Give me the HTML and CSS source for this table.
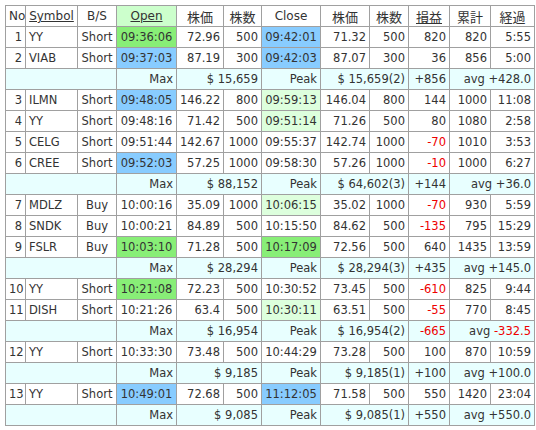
FILE: index.html
```html
<!DOCTYPE html>
<html>
<head>
<meta charset="utf-8">
<link rel="stylesheet" href="styles.css">
</head>
<body>
<table class="trades">
<colgroup>
<col class="c-no"><col class="c-sym"><col class="c-bs"><col class="c-open"><col class="c-p1"><col class="c-q1"><col class="c-close"><col class="c-p2"><col class="c-q2"><col class="c-pl"><col class="c-cum"><col class="c-el">
</colgroup>
<thead>
<tr>
<th>No</th><th><span class="lnk">Symbol</span></th><th>B/S</th><th class="hopen"><span class="lnk">Open</span></th><th class="cjk">株価</th><th class="cjk">株数</th><th>Close</th><th class="cjk">株価</th><th class="cjk">株数</th><th class="cjk"><span class="lnk">損益</span></th><th class="cjk">累計</th><th class="cjk">経過</th>
</tr>
</thead>
<tbody>
<tr><td class="r">1</td><td>YY</td><td class="c">Short</td><td class="c g">09:36:06</td><td class="r">72.96</td><td class="r">500</td><td class="c b">09:42:01</td><td class="r">71.32</td><td class="r">500</td><td class="r">820</td><td class="r">820</td><td class="r">5:55</td></tr>
<tr><td class="r">2</td><td>VIAB</td><td class="c">Short</td><td class="c b">09:37:03</td><td class="r">87.19</td><td class="r">300</td><td class="c b">09:42:03</td><td class="r">87.07</td><td class="r">300</td><td class="r">36</td><td class="r">856</td><td class="r">5:00</td></tr>
<tr class="sum"><td colspan="3"></td><td class="r">Max</td><td colspan="2" class="r">$ 15,659</td><td class="r">Peak</td><td colspan="2" class="r">$ 15,659(2)</td><td class="r">+856</td><td colspan="2" class="r">avg +428.0</td></tr>
<tr><td class="r">3</td><td>ILMN</td><td class="c">Short</td><td class="c b">09:48:05</td><td class="r">146.22</td><td class="r">800</td><td class="c lg">09:59:13</td><td class="r">146.04</td><td class="r">800</td><td class="r">144</td><td class="r">1000</td><td class="r">11:08</td></tr>
<tr><td class="r">4</td><td>YY</td><td class="c">Short</td><td class="c">09:48:16</td><td class="r">71.42</td><td class="r">500</td><td class="c lg">09:51:14</td><td class="r">71.26</td><td class="r">500</td><td class="r">80</td><td class="r">1080</td><td class="r">2:58</td></tr>
<tr><td class="r">5</td><td>CELG</td><td class="c">Short</td><td class="c">09:51:44</td><td class="r">142.67</td><td class="r">1000</td><td class="c">09:55:37</td><td class="r">142.74</td><td class="r">1000</td><td class="r neg">-70</td><td class="r">1010</td><td class="r">3:53</td></tr>
<tr><td class="r">6</td><td>CREE</td><td class="c">Short</td><td class="c b">09:52:03</td><td class="r">57.25</td><td class="r">1000</td><td class="c">09:58:30</td><td class="r">57.26</td><td class="r">1000</td><td class="r neg">-10</td><td class="r">1000</td><td class="r">6:27</td></tr>
<tr class="sum"><td colspan="3"></td><td class="r">Max</td><td colspan="2" class="r">$ 88,152</td><td class="r">Peak</td><td colspan="2" class="r">$ 64,602(3)</td><td class="r">+144</td><td colspan="2" class="r">avg +36.0</td></tr>
<tr><td class="r">7</td><td>MDLZ</td><td class="c">Buy</td><td class="c">10:00:16</td><td class="r">35.09</td><td class="r">1000</td><td class="c lg">10:06:15</td><td class="r">35.02</td><td class="r">1000</td><td class="r neg">-70</td><td class="r">930</td><td class="r">5:59</td></tr>
<tr><td class="r">8</td><td>SNDK</td><td class="c">Buy</td><td class="c">10:00:21</td><td class="r">84.89</td><td class="r">500</td><td class="c">10:15:50</td><td class="r">84.62</td><td class="r">500</td><td class="r neg">-135</td><td class="r">795</td><td class="r">15:29</td></tr>
<tr><td class="r">9</td><td>FSLR</td><td class="c">Buy</td><td class="c g">10:03:10</td><td class="r">71.28</td><td class="r">500</td><td class="c g">10:17:09</td><td class="r">72.56</td><td class="r">500</td><td class="r">640</td><td class="r">1435</td><td class="r">13:59</td></tr>
<tr class="sum"><td colspan="3"></td><td class="r">Max</td><td colspan="2" class="r">$ 28,294</td><td class="r">Peak</td><td colspan="2" class="r">$ 28,294(3)</td><td class="r">+435</td><td colspan="2" class="r">avg +145.0</td></tr>
<tr><td class="r">10</td><td>YY</td><td class="c">Short</td><td class="c g">10:21:08</td><td class="r">72.23</td><td class="r">500</td><td class="c">10:30:52</td><td class="r">73.45</td><td class="r">500</td><td class="r neg">-610</td><td class="r">825</td><td class="r">9:44</td></tr>
<tr><td class="r">11</td><td>DISH</td><td class="c">Short</td><td class="c">10:21:26</td><td class="r">63.4</td><td class="r">500</td><td class="c lg">10:30:11</td><td class="r">63.51</td><td class="r">500</td><td class="r neg">-55</td><td class="r">770</td><td class="r">8:45</td></tr>
<tr class="sum"><td colspan="3"></td><td class="r">Max</td><td colspan="2" class="r">$ 16,954</td><td class="r">Peak</td><td colspan="2" class="r">$ 16,954(2)</td><td class="r neg">-665</td><td colspan="2" class="r">avg <span class="neg">-332.5</span></td></tr>
<tr><td class="r">12</td><td>YY</td><td class="c">Short</td><td class="c">10:33:30</td><td class="r">73.48</td><td class="r">500</td><td class="c">10:44:29</td><td class="r">73.28</td><td class="r">500</td><td class="r">100</td><td class="r">870</td><td class="r">10:59</td></tr>
<tr class="sum"><td colspan="3"></td><td class="r">Max</td><td colspan="2" class="r">$ 9,185</td><td class="r">Peak</td><td colspan="2" class="r">$ 9,185(1)</td><td class="r">+100</td><td colspan="2" class="r">avg +100.0</td></tr>
<tr><td class="r">13</td><td>YY</td><td class="c">Short</td><td class="c b">10:49:01</td><td class="r">72.68</td><td class="r">500</td><td class="c b">11:12:05</td><td class="r">71.58</td><td class="r">500</td><td class="r">550</td><td class="r">1420</td><td class="r">23:04</td></tr>
<tr class="sum"><td colspan="3"></td><td class="r">Max</td><td colspan="2" class="r">$ 9,085</td><td class="r">Peak</td><td colspan="2" class="r">$ 9,085(1)</td><td class="r">+550</td><td colspan="2" class="r">avg +550.0</td></tr>
</tbody>
</table>
</body>
</html>
```

FILE: styles.css
```css
html, body {
  margin: 0;
  padding: 0;
  background: #ffffff;
}
body {
  padding: 5px;
}
.trades {
  border-collapse: collapse;
  table-layout: fixed;
  width: 530px;
  font-family: "DejaVu Sans", "Noto Sans CJK JP", sans-serif;
  font-size: 11.5px;
  color: #333333;
}
.c-no { width: 20px; }
.c-sym { width: 52px; }
.c-bs { width: 39px; }
.c-open { width: 60px; }
.c-p1 { width: 47px; }
.c-q1 { width: 38px; }
.c-close { width: 59px; }
.c-p2 { width: 49px; }
.c-q2 { width: 39px; }
.c-pl { width: 41px; }
.c-cum { width: 41px; }
.c-el { width: 44px; }
.trades th, .trades td {
  border: 1px solid #a0a0a0;
  height: 20px;
  padding: 0 3px;
  white-space: nowrap;
  overflow: hidden;
}
.trades th {
  font-weight: normal;
  text-align: center;
  font-size: 12px;
}
.trades th.cjk {
  font-size: 13px;
}
.trades td { text-align: left; }
.trades td.r { text-align: right; }
.trades td.c { text-align: center; }
.lnk { text-decoration: underline; }
.hopen { background: #ccffcc; }
.g { background: #88ee77; }
.b { background: #88ccff; }
.lg { background: #ddffdd; }
.sum td { background: #e8ffff; }
.neg { color: #ee0000; }
```
